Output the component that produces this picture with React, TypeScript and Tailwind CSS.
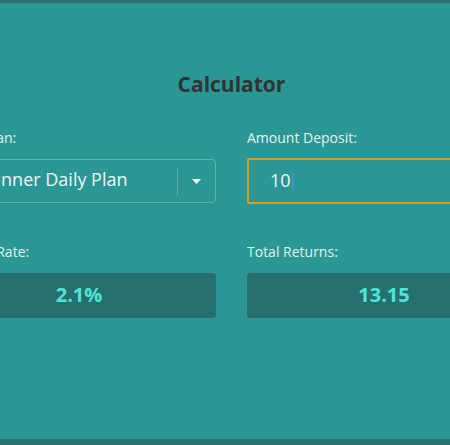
import React from "react";

export default function App() {
  return (
    <div
      className="w-[450px] h-[445px] overflow-hidden bg-[#2a9794] flex flex-col"
      style={{ fontFamily: '"Open Sans", sans-serif' }}
    >
      <div className="h-[3px] bg-[#2b6f6f] shrink-0" />
      <div className="flex-1 flex flex-col">
        <div className="ml-[-58px] w-[579px] pt-[67px]">
          <h1 className="text-center text-[21px] leading-[28px] font-bold text-[#333333]">
            Calculator
          </h1>
          <div className="mt-[30px] flex gap-[31px]">
            <div className="w-[274px] shrink-0">
              <div className="text-[14px] leading-[20px] text-[#e3f3f1]">Select Plan:</div>
              <div className="mt-[11px] h-[44px] rounded-[4px] border border-[#62b4b1] flex items-center">
                <span className="flex-1 pl-[22px] mb-[4px] text-[18px] text-[#eef8f7] whitespace-nowrap">
                  Beginner Daily Plan
                </span>
                <div className="w-px h-[27px] bg-[#5fb1ae]" />
                <div className="w-[37px] flex justify-center">
                  <svg width="9" height="5" viewBox="0 0 9 5">
                    <path d="M0 0 L9 0 L4.5 5 Z" fill="#ffffff" />
                  </svg>
                </div>
              </div>
            </div>
            <div className="w-[274px] shrink-0">
              <div className="text-[14px] leading-[20px] text-[#e3f3f1]">Amount Deposit:</div>
              <div className="mt-[10px] h-[46px] border-2 border-[#cfa128] rounded-[2px] flex items-center pl-[21px]">
                <span className="text-[18px] mb-[2px] text-[#eef8f7]">10</span>
                <span className="ml-[1px] w-[2px] h-[18px] bg-[#3d92d0]" />
              </div>
            </div>
          </div>
          <div className="mt-[38px] flex gap-[31px]">
            <div className="w-[274px] shrink-0">
              <div className="text-[14px] leading-[20px] text-[#e3f3f1]">Interest Rate:</div>
              <div className="mt-[11px] h-[45px] rounded-[3px] bg-[#276f6f] flex items-center justify-center">
                <span className="text-[20px] mb-[2px] font-bold text-[#4de6d6]">2.1%</span>
              </div>
            </div>
            <div className="w-[274px] shrink-0">
              <div className="text-[14px] leading-[20px] text-[#e3f3f1]">Total Returns:</div>
              <div className="mt-[11px] h-[45px] rounded-[3px] bg-[#276f6f] flex items-center justify-center">
                <span className="text-[20px] mb-[2px] font-bold text-[#4de6d6]">13.15</span>
              </div>
            </div>
          </div>
        </div>
      </div>
      <div className="h-[6px] bg-[#277171] shrink-0" />
    </div>
  );
}
